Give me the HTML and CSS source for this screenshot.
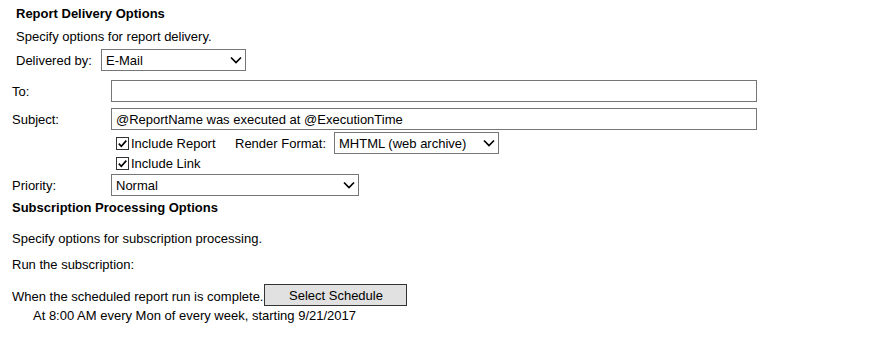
FILE: index.html
```html
<!DOCTYPE html>
<html>
<head>
<meta charset="utf-8">
<title>Report Delivery Options</title>
<link rel="stylesheet" href="styles.css">
</head>
<body>
<div class="page">
  <div class="title indent16">Report Delivery Options</div>
  <div class="desc indent16">Specify options for report delivery.</div>
  <div class="delivered indent16">
    <span class="dlabel">Delivered by:</span>
    <span class="selwrap sel-delivery">
      <select class="sel"><option>E-Mail</option></select>
      <svg class="chev" width="12" height="8" viewBox="0 0 12 8"><polyline points="1,1.5 6,6.5 11,1.5" fill="none" stroke="#000" stroke-width="1.7"/></svg>
    </span>
  </div>

  <div class="form">
    <div class="row r-to">
      <span class="flabel">To:</span>
      <input class="txt" type="text" value="">
    </div>
    <div class="row r-subject">
      <span class="flabel">Subject:</span>
      <input class="txt" type="text" value="@ReportName was executed at @ExecutionTime">
    </div>
    <div class="row r-report">
      <span class="flabel"></span>
      <span class="cbitem">
        <span class="cb"><svg width="11" height="11" viewBox="0 0 11 11"><polyline points="1.8,5.6 4.3,8.2 9.3,2.6" fill="none" stroke="#000" stroke-width="1.6"/></svg></span>
        <span>Include Report</span>
      </span>
      <span class="rlabel">Render Format:</span>
      <span class="selwrap sel-format">
        <select class="sel"><option>MHTML (web archive)</option></select>
        <svg class="chev" width="12" height="8" viewBox="0 0 12 8"><polyline points="1,1.5 6,6.5 11,1.5" fill="none" stroke="#000" stroke-width="1.7"/></svg>
      </span>
    </div>
    <div class="row r-link">
      <span class="flabel"></span>
      <span class="cbitem">
        <span class="cb"><svg width="11" height="11" viewBox="0 0 11 11"><polyline points="1.8,5.6 4.3,8.2 9.3,2.6" fill="none" stroke="#000" stroke-width="1.6"/></svg></span>
        <span>Include Link</span>
      </span>
    </div>
    <div class="row r-priority">
      <span class="flabel">Priority:</span>
      <span class="selwrap sel-priority">
        <select class="sel"><option>Normal</option></select>
        <svg class="chev" width="12" height="8" viewBox="0 0 12 8"><polyline points="1,1.5 6,6.5 11,1.5" fill="none" stroke="#000" stroke-width="1.7"/></svg>
      </span>
    </div>
  </div>

  <div class="section2">
    <div class="title2">Subscription Processing Options</div>
    <div class="line l-spec">Specify options for subscription processing.</div>
    <div class="line l-run">Run the subscription:</div>
    <div class="when">
      <span>When the scheduled report run is complete.</span>
      <button class="btn" type="button">Select Schedule</button>
    </div>
    <div class="line l-at">At 8:00 AM every Mon of every week, starting 9/21/2017</div>
  </div>
</div>
</body>
</html>
```

FILE: styles.css
```css
html, body {
  margin: 0;
  padding: 0;
  background: #ffffff;
}

body {
  font-family: "Liberation Sans", Arial, sans-serif;
  font-size: 13px;
  color: #000000;
}

.page {
  padding-top: 6px;
}

.indent16 {
  padding-left: 16px;
}

.title {
  font-weight: bold;
  line-height: 16px;
}

.desc {
  margin-top: 7px;
  line-height: 16px;
}

.delivered {
  margin-top: 4px;
  display: flex;
  align-items: center;
  height: 22px;
}

.dlabel {
  width: 85px;
}

.selwrap {
  position: relative;
  display: inline-block;
  height: 22px;
}

.sel {
  -webkit-appearance: none;
  appearance: none;
  box-sizing: border-box;
  width: 100%;
  height: 22px;
  margin: 0;
  padding: 0 20px 0 4px;
  border: 1px solid #767676;
  border-radius: 0;
  background: #ffffff;
  font-family: "Liberation Sans", Arial, sans-serif;
  font-size: 13px;
  color: #000000;
  outline: none;
}

.chev {
  position: absolute;
  right: 4px;
  top: 7px;
  pointer-events: none;
}

.sel-delivery {
  width: 145px;
}

.sel-format {
  width: 165px;
}

.sel-priority {
  width: 248px;
}

.form {
  margin-top: 9px;
  padding-left: 12px;
  display: flex;
  flex-direction: column;
}

.row {
  display: flex;
  align-items: center;
}

.flabel {
  width: 99px;
  flex: none;
}

.txt {
  box-sizing: border-box;
  width: 646px;
  height: 22px;
  margin: 0;
  padding: 0 4px;
  border: 1px solid #767676;
  border-radius: 0;
  font-family: "Liberation Sans", Arial, sans-serif;
  font-size: 13px;
  color: #000000;
  outline: none;
}

.r-to {
  height: 22px;
}

.r-subject {
  height: 22px;
  margin-top: 6px;
}

.r-report {
  height: 22px;
  margin-top: 2px;
}

.r-link {
  height: 16px;
  margin-top: 1px;
}

.r-priority {
  height: 22px;
  margin-top: 3px;
}

.cbitem {
  width: 124px;
  display: flex;
  align-items: center;
  flex: none;
}

.cb {
  box-sizing: border-box;
  width: 13px;
  height: 13px;
  margin-left: 5px;
  margin-right: 2px;
  border: 1px solid #333333;
  background: #ffffff;
  display: inline-flex;
  align-items: center;
  justify-content: center;
}

.cb svg {
  display: block;
}

.rlabel {
  width: 99px;
  flex: none;
}

.section2 {
  margin-top: 4px;
  padding-left: 12px;
}

.title2 {
  font-weight: bold;
  line-height: 16px;
}

.line {
  line-height: 16px;
}

.l-spec {
  margin-top: 15px;
}

.l-run {
  margin-top: 10px;
}

.when {
  margin-top: 11px;
  height: 22px;
  display: flex;
  align-items: center;
}

.when span {
  padding-top: 2px;
}

.btn {
  box-sizing: border-box;
  width: 143px;
  height: 22px;
  margin: 0 0 0 1px;
  padding: 0;
  border: 1px solid #333333;
  border-radius: 0;
  background: #e1e1e1;
  font-family: "Liberation Sans", Arial, sans-serif;
  font-size: 13px;
  color: #000000;
}

.l-at {
  margin-top: 2px;
  padding-left: 21px;
}
```
